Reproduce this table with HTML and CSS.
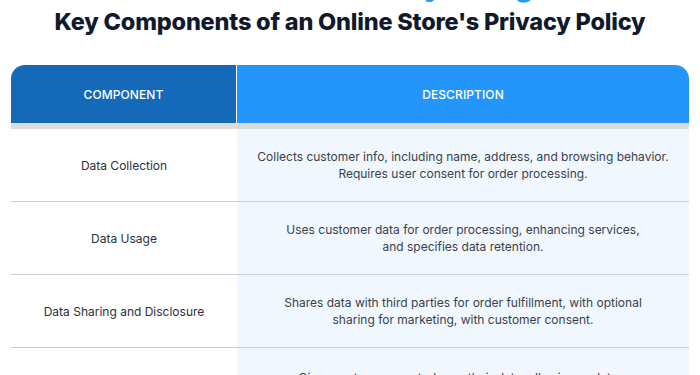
FILE: index.html
```html
<!DOCTYPE html>
<html lang="en">
<head>
<meta charset="utf-8">
<title>Key Components of an Online Store's Privacy Policy</title>
<link rel="stylesheet" href="styles.css">
</head>
<body>
<div class="page">
  <div class="kicker">Online Store Policy Design</div>
  <h1 class="title">Key Components of an Online Store's Privacy Policy</h1>
  <div class="table">
    <div class="head head-left">COMPONENT</div>
    <div class="head head-right">DESCRIPTION</div>
    <div class="band"></div>

    <div class="cell name">Data Collection</div>
    <div class="cell desc">Collects customer info, including name, address, and browsing behavior.<br>Requires user consent for order processing.</div>

    <div class="cell name">Data Usage</div>
    <div class="cell desc">Uses customer data for order processing, enhancing services,<br>and specifies data retention.</div>

    <div class="cell name">Data Sharing and Disclosure</div>
    <div class="cell desc">Shares data with third parties for order fulfillment, with optional<br>sharing for marketing, with customer consent.</div>

    <div class="cell name last">Customer Rights</div>
    <div class="cell desc last">Gives customers control over their data, allowing updates,<br>deletion, and opting out of marketing.</div>
  </div>
</div>
</body>
</html>
```
FILE: styles.css
```css
html, body {
  margin: 0;
  padding: 0;
  background: #ffffff;
}
body {
  font-family: Inter, "Open Sans", Arial, sans-serif;
  color: #2b303b;
  overflow: hidden;
}
.page {
  padding: 0 11px;
}
.kicker {
  margin-top: -30px;
  height: 30px;
  padding-left: 16px;
  text-align: center;
  color: #2496fb;
  font-weight: 800;
  font-size: 30px;
  line-height: 30px;
}
.title {
  margin: 0;
  padding-top: 7px;
  text-align: center;
  font-size: 23.5px;
  line-height: 30px;
  font-weight: 800;
  color: #111a2c;
  letter-spacing: -0.2px;
}
.table {
  margin-top: 28px;
  display: grid;
  grid-template-columns: 225px 1fr;
  column-gap: 1px;
}
.head {
  height: 58px;
  display: flex;
  align-items: center;
  justify-content: center;
  color: #ffffff;
  font-size: 12px;
  font-weight: 500;
  letter-spacing: 0.1px;
}
.head-left {
  background: #1469b8;
  border-top-left-radius: 14px;
}
.head-right {
  background: #2496fb;
  border-top-right-radius: 14px;
}
.band {
  grid-column: 1 / 3;
  height: 6px;
  background: #dcdcdc;
}
.cell {
  height: 72px;
  display: flex;
  align-items: center;
  justify-content: center;
  text-align: center;
  font-size: 12px;
  line-height: 17px;
  border-bottom: 1px solid #c9ced6;
}
.cell.last {
  height: 75px;
}
.name {
  background: #ffffff;
  color: #2b303b;
  margin-right: -1px;
}
.desc {
  background: #f0f7ff;
  color: #3a3f4b;
}
```
